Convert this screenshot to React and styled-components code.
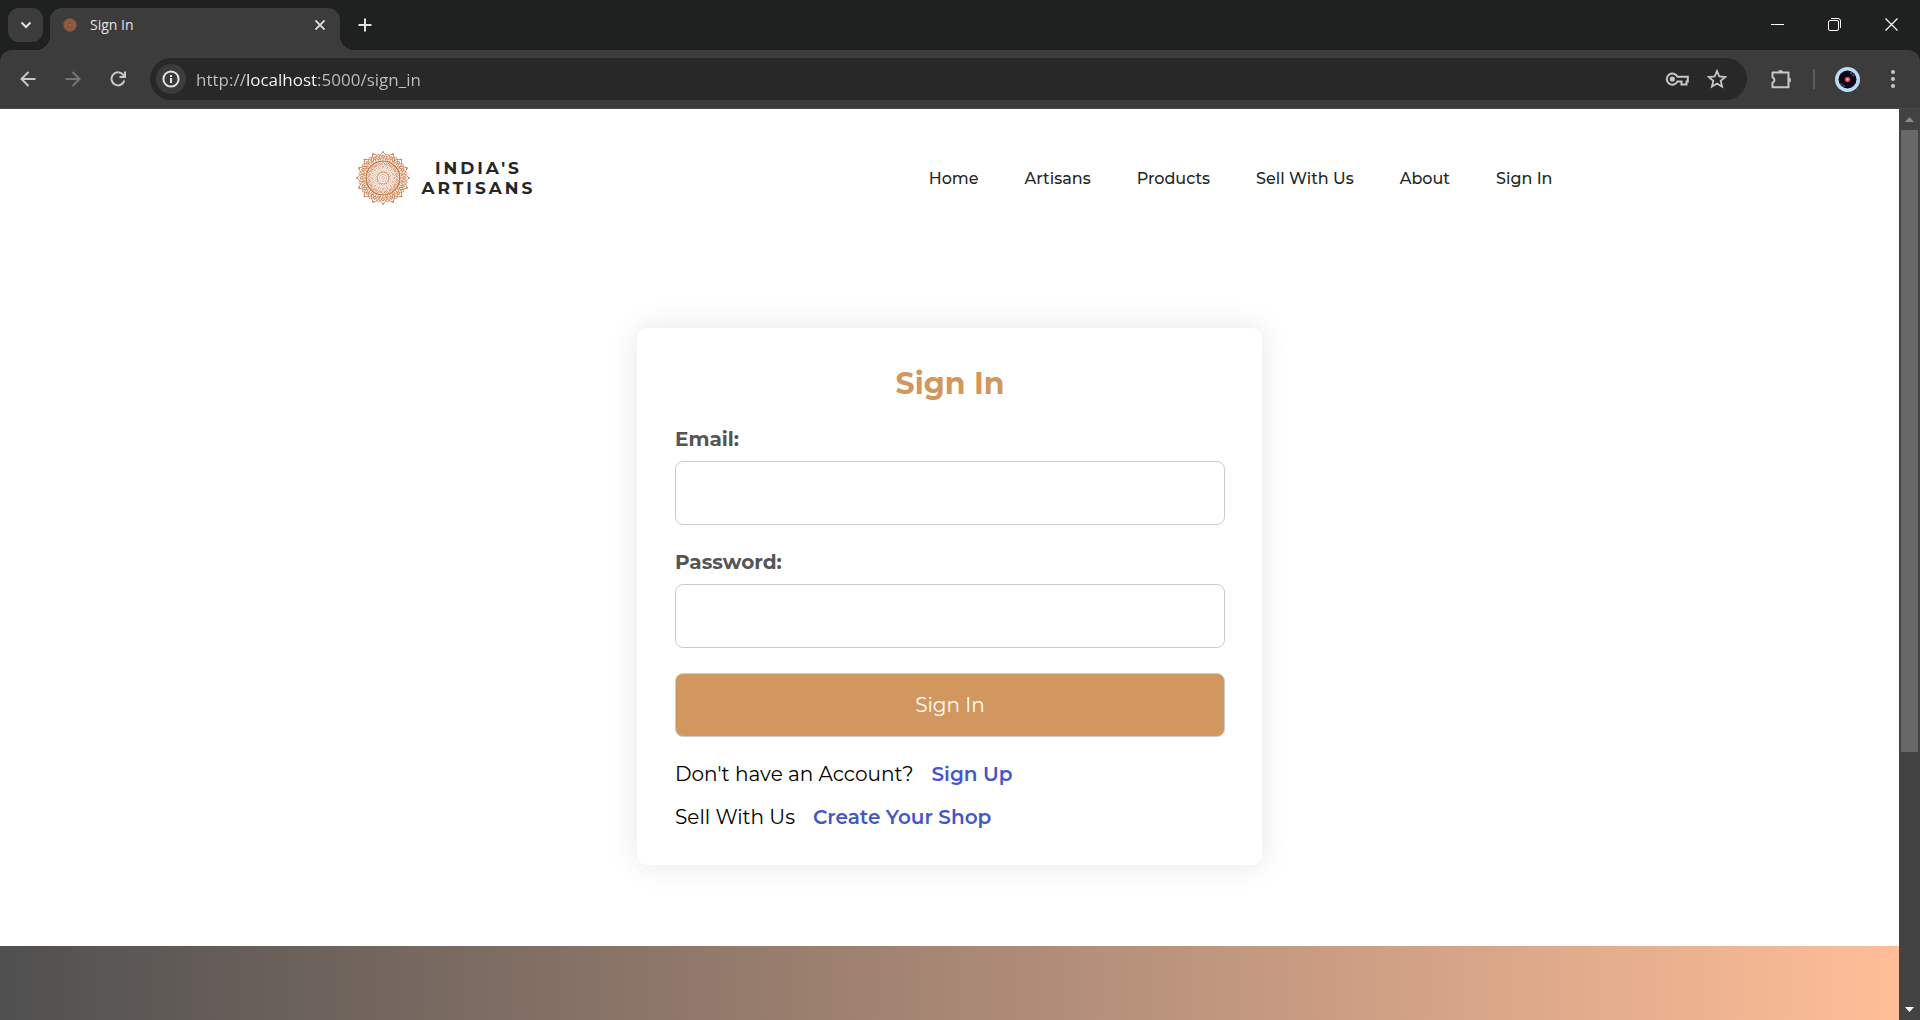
import React from "react";
import styled, { createGlobalStyle, css } from "styled-components";

const chromeFont = '"Open Sans", "Noto Sans", sans-serif';
const pageFont = 'Montserrat, Inter, "Open Sans", sans-serif';

const GlobalStyle = createGlobalStyle`
  *, *::before, *::after { box-sizing: border-box; }
  html, body, #root { height: 100%; margin: 0; }
  body { background: #fff; overflow: hidden; }
  button { border: 0; padding: 0; background: none; color: inherit; cursor: pointer; }
  a { color: inherit; text-decoration: none; }
  svg { display: block; }
`;

const Browser = styled.div`
  display: flex;
  flex-direction: column;
  height: 100vh;
  background: #1f2120;
  font-family: ${chromeFont};
`;

const TabStrip = styled.div`
  display: flex;
  height: 50px;
  flex: none;
  padding-left: 8px;
  color: #e3e3e3;
`;

const TabSearch = styled.button`
  display: grid;
  place-items: center;
  width: 35px;
  height: 34px;
  margin: 8px 7px 0 0;
  border-radius: 11px;
  background: #3c3c3c;
`;

const flare = css`
  content: "";
  position: absolute;
  bottom: 0;
  width: 14px;
  height: 14px;
`;

const Tab = styled.div`
  position: relative;
  display: flex;
  align-items: center;
  width: 290px;
  margin-top: 8px;
  padding: 0 13px 8px 13px;
  border-radius: 12px 12px 0 0;
  background: #3c3c3c;
  font-size: 14px;
  line-height: 20px;

  &::before {
    ${flare}
    left: -14px;
    background: radial-gradient(circle at 0 0, transparent 14px, #3c3c3c 14px);
  }
  &::after {
    ${flare}
    right: -14px;
    background: radial-gradient(circle at 100% 0, transparent 14px, #3c3c3c 14px);
  }
`;

const TabTitle = styled.span`
  flex: 1;
  margin-left: 13px;
`;

const TabClose = styled.button`
  display: grid;
  place-items: center;
  width: 14px;
  height: 14px;
`;

const NewTab = styled.button`
  display: grid;
  place-items: center;
  width: 34px;
  height: 34px;
  margin: 8px 0 0 8px;
`;

const WindowControls = styled.div`
  display: flex;
  margin-left: auto;
`;

const WindowButton = styled.button`
  display: grid;
  place-items: center;
  width: 57px;
  height: 49px;
  color: #fff;
`;

const Toolbar = styled.div`
  display: flex;
  flex: none;
  align-items: center;
  height: 59px;
  padding: 0 5px;
  border-bottom: 1px solid #4a4a4a;
  border-radius: 12px 12px 0 0;
  background: #3c3c3c;
  color: #c7c7c7;
`;

const ToolButton = styled.button`
  display: grid;
  place-items: center;
  width: 45px;
  height: 45px;
  color: ${(p) => (p.$muted ? "#757575" : "#c7c7c7")};
`;

const AddressBar = styled.div`
  display: flex;
  flex: 1;
  align-items: center;
  height: 42px;
  margin: 0 11px 0 10px;
  padding: 0 10px 0 6px;
  border-radius: 21px;
  background: #282828;
`;

const SiteInfo = styled.button`
  display: grid;
  place-items: center;
  width: 30px;
  height: 30px;
  border-radius: 50%;
  background: #3c3c3c;
  color: #e3e3e3;
`;

const Address = styled.input`
  flex: 1;
  min-width: 0;
  height: 30px;
  margin: 0 0 0 10px;
  padding: 0;
  border: 0;
  outline: 0;
  background: linear-gradient(90deg, #c0c0c0 50px, #fff 50px 121px, #c0c0c0 121px);
  background-clip: text;
  -webkit-text-fill-color: transparent;
  font-family: ${chromeFont};
  font-size: 17px;
`;

const AddressAction = styled.button`
  display: grid;
  place-items: center;
  width: 40px;
  height: 40px;
  color: #c7c7c7;
`;

const Divider = styled.span`
  width: 2px;
  height: 20px;
  margin: 0 10px;
  background: #5c5c5c;
`;

const Viewport = styled.div`
  display: flex;
  flex: 1;
  min-height: 0;
  background: #fff;
`;

const Page = styled.div`
  display: flex;
  flex: 1;
  flex-direction: column;
  min-width: 0;
  overflow: hidden;
  font-family: ${pageFont};
`;

const Header = styled.header`
  display: flex;
  flex: none;
  align-items: center;
  justify-content: space-between;
  width: 100%;
  max-width: 1206px;
  margin: 0 auto;
  padding: 42px 0 40px 9px;
`;

const Brand = styled.a`
  display: flex;
  align-items: center;
  gap: 12px;
`;

const BrandName = styled.span`
  color: #262626;
  font-size: 17px;
  font-weight: 700;
  line-height: 20px;
  letter-spacing: 3px;
  text-align: center;
`;

const Nav = styled.nav`
  display: flex;
  gap: 46px;
  padding-top: 2px;
`;

const NavLink = styled.a`
  color: #262626;
  font-size: 16px;
  font-weight: 500;
  line-height: 24px;
`;

const Main = styled.main`
  flex: none;
  padding: 83px 24px 81px;
`;

const Card = styled.form`
  display: flex;
  flex-direction: column;
  gap: 25px;
  width: 100%;
  max-width: 625px;
  margin: 0 auto;
  padding: 38px 37px 36px 38px;
  border-radius: 10px;
  background: #fff;
  box-shadow: 0 0 30px rgba(0, 0, 0, 0.1);
  font-size: 20px;
  line-height: 24px;
`;

const Title = styled.h1`
  margin: 0;
  color: #d2975e;
  font-size: 30px;
  font-weight: 700;
  line-height: 36px;
  text-align: center;
`;

const Field = styled.div`
  display: flex;
  flex-direction: column;
  gap: 10px;
`;

const Label = styled.label`
  color: #555;
  font-weight: 700;
`;

const control = css`
  width: 100%;
  height: 64px;
  border: 1px solid #ccc;
  border-radius: 8px;
  font: inherit;
`;

const TextInput = styled.input`
  ${control}
  padding: 0 16px;
  background: #fff;
`;

const Submit = styled.button`
  ${control}
  background: #d2975e;
  color: #fff;
`;

const Links = styled.div`
  display: flex;
  flex-direction: column;
  gap: 19px;
`;

const LinkRow = styled.p`
  display: flex;
  gap: 18px;
  margin: 0;
  color: #000;
`;

const TextLink = styled.a`
  color: #4457c9;
  font-weight: 600;
`;

const Footer = styled.footer`
  flex: 1;
  background: linear-gradient(90deg, #505050, #ffbe98);
`;

const ScrollTrack = styled.div`
  display: flex;
  flex: none;
  flex-direction: column;
  width: 21px;
  background: #424242;
`;

const ScrollArrow = styled.button`
  display: grid;
  place-items: center;
  height: 21px;
  color: ${(p) => (p.$muted ? "#8a8a8a" : "#fff")};
`;

const ScrollLane = styled.div`
  flex: 1;
  padding: 0 2px;
`;

const ScrollThumb = styled.div`
  height: 71.6%;
  background: #686868;
`;

const Icon = ({ size = 20, box = 20, stroke = 2, children, ...rest }) => (
  <svg width={size} height={size} viewBox={`0 0 ${box} ${box}`} fill="none" stroke="currentColor" strokeWidth={stroke} aria-hidden="true" {...rest}>
    {children}
  </svg>
);

const around = (count, offset, draw) =>
  Array.from({ length: count }, (_, i) => (
    <g key={i} transform={`rotate(${((i + offset) * 360) / count})`}>{draw}</g>
  ));

const Mandala = () => (
  <svg width="54" height="54" viewBox="-56 -56 112 112" fill="none" stroke="#cb7440" strokeWidth="1.7" aria-hidden="true">
    {around(16, 0.5, <path d="M-7 -40 Q-8 -46 0 -51 Q8 -46 7 -40" opacity=".7" />)}
    {around(16, 0, <path d="M-9 -37 Q-10 -47 0 -54 Q10 -47 9 -37 M-5 -37 Q-5 -44 0 -48 Q5 -44 5 -37 M0 -36 V-44" />)}
    {around(16, 0, <circle cy="-54" r="1" />)}
    <circle r="35" strokeWidth="3" />
    {around(32, 0, <path d="M-3 -29 Q0 -36 3 -29" opacity=".8" />)}
    <circle r="28.5" strokeWidth="1.2" opacity=".7" />
    {around(16, 0.5, <path d="M-5 -20 Q-5 -26 0 -29 Q5 -26 5 -20 M0 -20 V-26" opacity=".6" />)}
    <circle r="19.5" strokeWidth="1.2" opacity=".5" />
    {around(16, 0, <path d="M-3 -13 Q0 -22 3 -13" opacity=".5" />)}
    <circle r="12" strokeWidth="2.6" opacity=".7" />
    <circle r="7.5" strokeWidth="2" opacity=".6" />
    <circle r="3" opacity=".7" />
  </svg>
);

const Favicon = () => (
  <svg width="14" height="14" viewBox="-7 -7 14 14" aria-hidden="true">
    <circle r="6.5" fill="#8f5838" />
    <circle r="6.2" fill="none" stroke="#a45f36" strokeDasharray="1 1" />
    <circle r="3.5" fill="#7c5543" stroke="#986246" />
    <circle r="1.2" fill="#96705c" />
  </svg>
);

const Avatar = () => (
  <svg width="25" height="25" viewBox="-12.5 -12.5 25 25" aria-hidden="true">
    <circle r="12.5" fill="#b9dcf7" />
    <circle r="9" fill="#0a0718" />
    <path d="M3 -7 L7 -3 M-7 4 L-3 7" stroke="#5c5868" strokeWidth="2" strokeDasharray="2 1" />
    <circle r="2.8" fill="#e8305c" />
    <circle r="1.2" fill="#ffd35c" />
  </svg>
);

const navItems = ["Home", "Artisans", "Products", "Sell With Us", "About", "Sign In"];

export default function App() {
  return (
    <Browser>
      <GlobalStyle />
      <TabStrip>
        <TabSearch aria-label="Search tabs">
          <Icon size={12} box={12}><path d="M1.5 3.5 6 8l4.5-4.5" /></Icon>
        </TabSearch>
        <Tab>
          <Favicon />
          <TabTitle>Sign In</TabTitle>
          <TabClose aria-label="Close tab">
            <Icon size={10} box={10} stroke={1.8}><path d="m.5.5 9 9m0-9-9 9" /></Icon>
          </TabClose>
        </Tab>
        <NewTab aria-label="New tab">
          <Icon size={14} box={14}><path d="M7 .5v13M.5 7h13" /></Icon>
        </NewTab>
        <WindowControls>
          <WindowButton aria-label="Minimize">
            <Icon size={13} box={13} stroke={1}><path d="M0 6.5h13" /></Icon>
          </WindowButton>
          <WindowButton aria-label="Restore">
            <Icon size={13} box={13} stroke={1}>
              <rect x=".5" y="2.5" width="10" height="10" rx="1.5" />
              <path d="M3 .5h7a2.5 2.5 0 0 1 2.5 2.5v7" />
            </Icon>
          </WindowButton>
          <WindowButton aria-label="Close">
            <Icon size={13} box={13} stroke={1.2}><path d="m.5.5 12 12m0-12-12 12" /></Icon>
          </WindowButton>
        </WindowControls>
      </TabStrip>

      <Toolbar>
        <ToolButton aria-label="Back">
          <Icon size={16} box={16}><path d="M15.5 8H2M8.5 1 1.5 8l7 7" /></Icon>
        </ToolButton>
        <ToolButton $muted aria-label="Forward">
          <Icon size={16} box={16}><path d="M.5 8H14M7.5 1l7 7-7 7" /></Icon>
        </ToolButton>
        <ToolButton aria-label="Reload">
          <Icon size={16} box={16}><path d="M14.3 9.5A6.5 6.5 0 1 1 13 3.7L14.5 5.5M15 .5V6H9.5" /></Icon>
        </ToolButton>
        <AddressBar>
          <SiteInfo aria-label="Site information">
            <Icon size={18} box={18}><circle cx="9" cy="9" r="7.6" /><path d="M9 8v5M9 5v2" /></Icon>
          </SiteInfo>
          <Address aria-label="Address" defaultValue="http://localhost:5000/sign_in" spellCheck={false} />
          <AddressAction aria-label="Passwords">
            <Icon size={24} box={24}>
              <path d="M12.5 9.8a5.6 5.6 0 1 0 0 4.6h4v3h5v-3h1.3V9.8Z" />
              <circle cx="7.3" cy="12" r="2.6" fill="currentColor" stroke="none" />
            </Icon>
          </AddressAction>
          <AddressAction aria-label="Bookmark this page">
            <Icon size={20} box={20} stroke={1.8}><path d="m10 2 2.3 5.5 6 .5-4.6 3.9 1.4 5.8-5.1-3.1-5.1 3.1 1.4-5.8L1.7 8l6-.5Z" /></Icon>
          </AddressAction>
        </AddressBar>
        <ToolButton aria-label="Extensions">
          <Icon size={22} box={22}>
            <path d="M2.5 4.5h16v14.7h-16v-4.4a3 3 0 0 0 0-5.6Z" strokeLinejoin="round" />
            <path d="M8 4.5a2.5 2.5 0 0 1 5 0ZM18.5 9.5a2.5 2.5 0 0 1 0 5Z" fill="currentColor" stroke="none" />
          </Icon>
        </ToolButton>
        <Divider />
        <ToolButton aria-label="Profile"><Avatar /></ToolButton>
        <ToolButton aria-label="Menu">
          <Icon size={20} box={20} fill="currentColor" stroke={0}>
            <circle cx="10" cy="3" r="2" /><circle cx="10" cy="10" r="2" /><circle cx="10" cy="17" r="2" />
          </Icon>
        </ToolButton>
      </Toolbar>

      <Viewport>
        <Page>
          <Header>
            <Brand href="#">
              <Mandala />
              <BrandName>INDIA'S<br />ARTISANS</BrandName>
            </Brand>
            <Nav>
              {navItems.map((item) => <NavLink key={item} href="#">{item}</NavLink>)}
            </Nav>
          </Header>
          <Main>
            <Card onSubmit={(e) => e.preventDefault()}>
              <Title>Sign In</Title>
              <Field>
                <Label htmlFor="email">Email:</Label>
                <TextInput id="email" type="email" />
              </Field>
              <Field>
                <Label htmlFor="password">Password:</Label>
                <TextInput id="password" type="password" />
              </Field>
              <Submit type="submit">Sign In</Submit>
              <Links>
                <LinkRow>Don't have an Account? <TextLink href="#">Sign Up</TextLink></LinkRow>
                <LinkRow>Sell With Us <TextLink href="#">Create Your Shop</TextLink></LinkRow>
              </Links>
            </Card>
          </Main>
          <Footer />
        </Page>
        <ScrollTrack>
          <ScrollArrow $muted aria-label="Scroll up">
            <svg width="9" height="5" viewBox="0 0 9 5"><path d="M4.5 0 9 5H0Z" fill="currentColor" /></svg>
          </ScrollArrow>
          <ScrollLane><ScrollThumb /></ScrollLane>
          <ScrollArrow aria-label="Scroll down">
            <svg width="9" height="5" viewBox="0 0 9 5"><path d="M0 0h9L4.5 5Z" fill="currentColor" /></svg>
          </ScrollArrow>
        </ScrollTrack>
      </Viewport>
    </Browser>
  );
}
